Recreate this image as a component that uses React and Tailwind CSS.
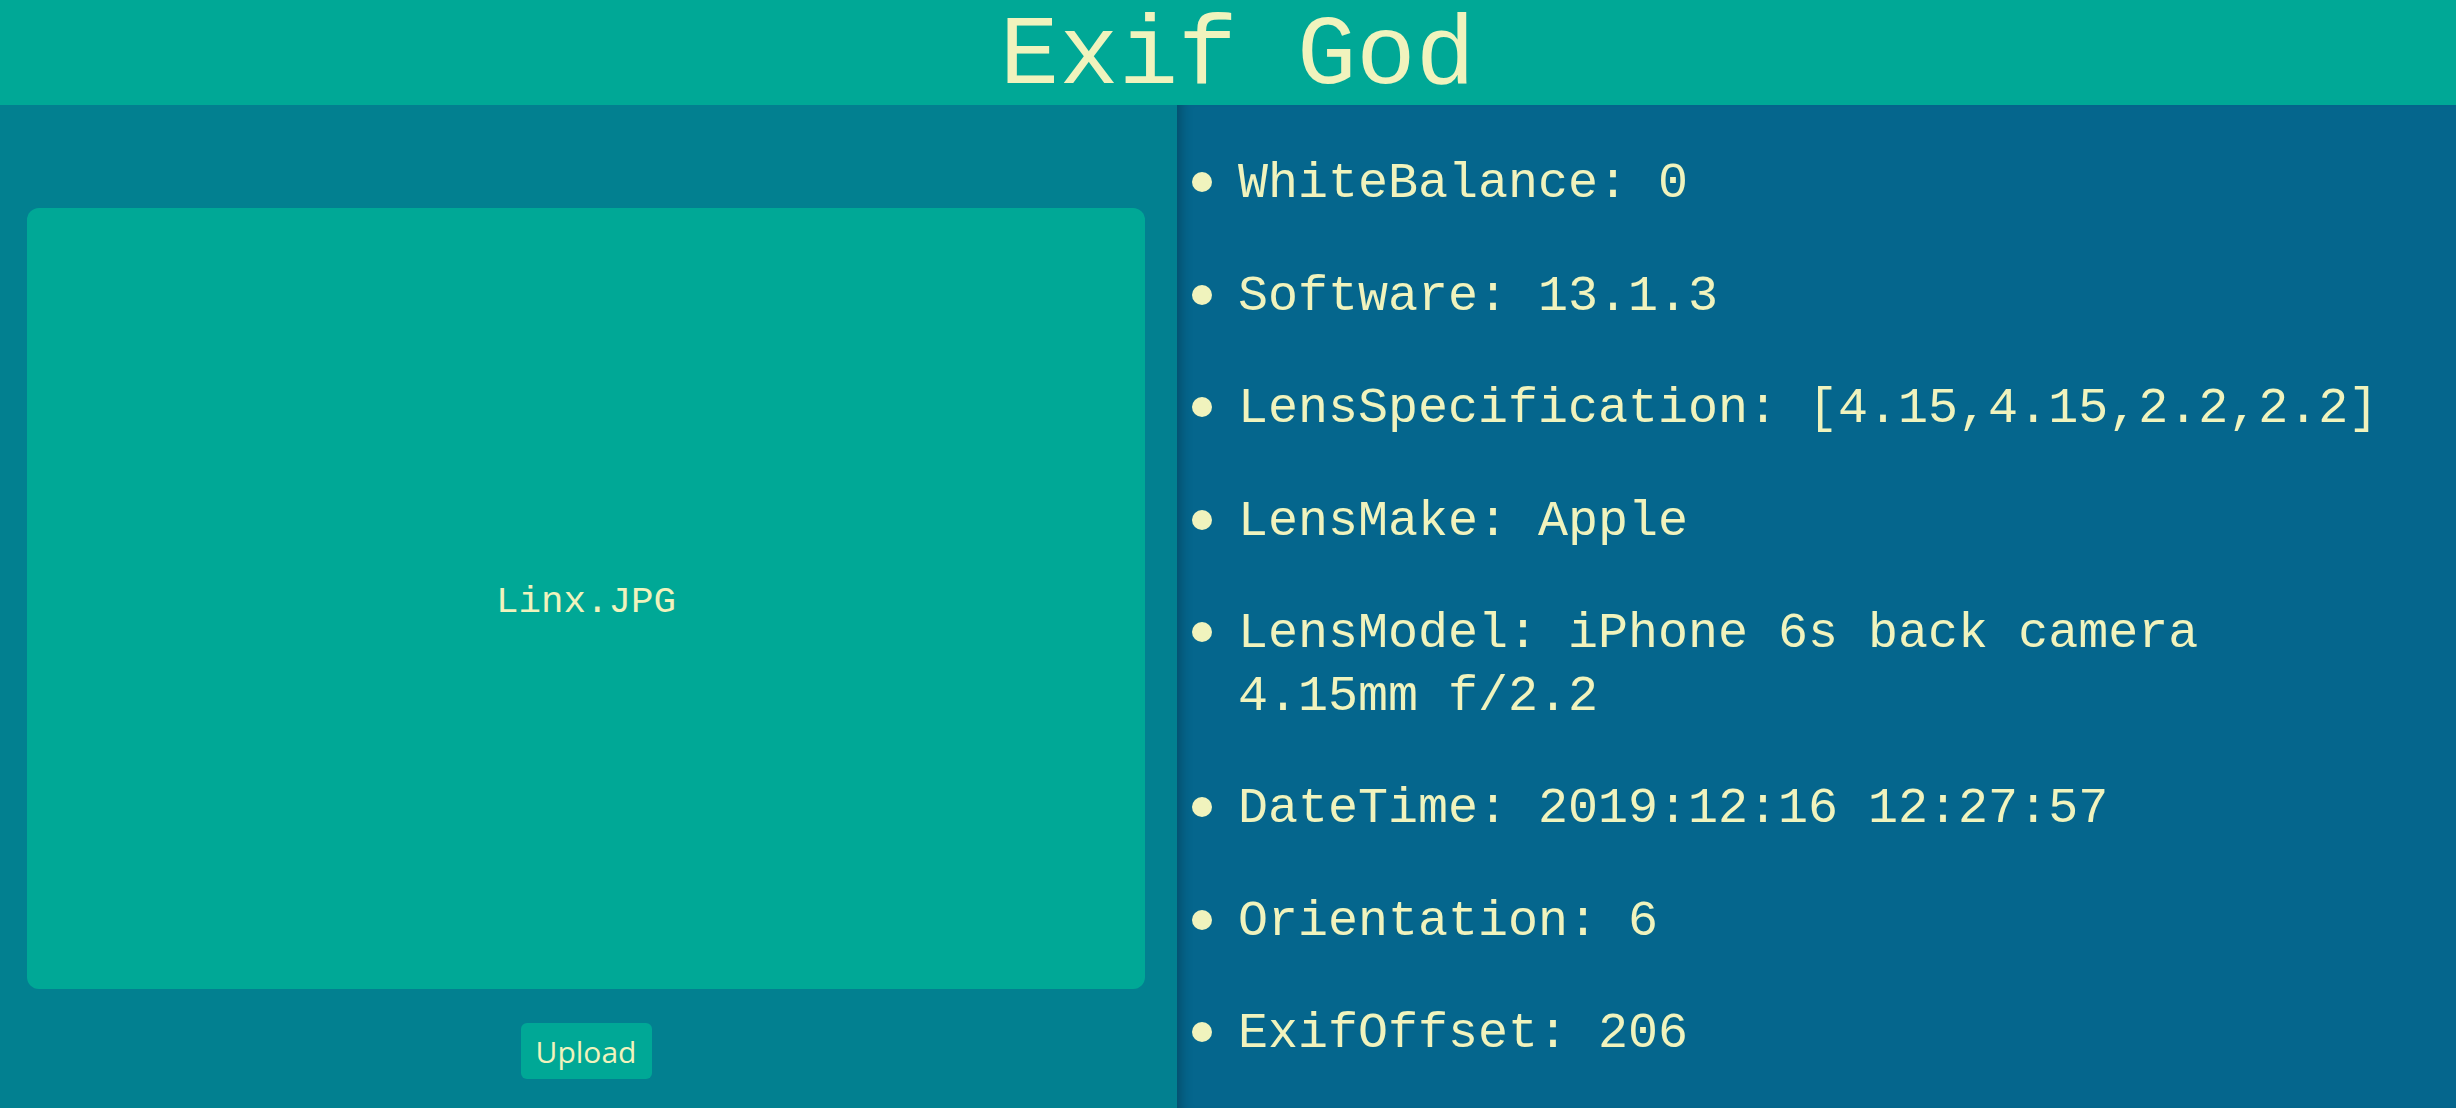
import React from "react";

const tags = [
  ["WhiteBalance", "0"],
  ["Software", "13.1.3"],
  ["LensSpecification", "[4.15,4.15,2.2,2.2]"],
  ["LensMake", "Apple"],
  ["LensModel", "iPhone 6s back camera 4.15mm f/2.2"],
  ["DateTime", "2019:12:16 12:27:57"],
  ["Orientation", "6"],
  ["ExifOffset", "206"],
];

export default function App() {
  return (
    <div className="flex h-screen flex-col overflow-hidden bg-[#05668d] font-['Liberation_Mono',monospace] text-[#f0f3bd]">
      <header className="h-[105px] shrink-0 bg-[#00a896] pl-[19px] pt-[10px] text-center">
        <h1 className="text-[99px] leading-[95px]">Exif God</h1>
      </header>

      <main className="flex flex-1">
        <section className="w-[1177px] shrink-0 bg-[#028090] pl-[27px] pr-[32px] pt-[103px]">
          <div className="flex h-[781px] items-center justify-center rounded-xl bg-[#00a896] pt-[7px] text-[37.5px]">
            Linx.JPG
          </div>
          <div className="mt-[34px] flex justify-center">
            <button className="h-[56px] w-[131px] rounded-md bg-[#00a896] font-['Open_Sans',sans-serif] text-[30px] text-[#f0f3bd]">
              Upload
            </button>
          </div>
        </section>

        <section className="flex-1 pl-[15px] pr-[60px] pt-[48px] shadow-[inset_14px_0_12px_-10px_rgba(0,0,0,0.25)]">
          <ul className="space-y-[50px] text-[50px] leading-[62.5px]">
            {tags.map(([key, value]) => (
              <li key={key} className="flex">
                <span className="flex h-[58px] w-5 shrink-0 items-center">
                  <span className="h-5 w-5 rounded-full bg-[#f0f3bd]" />
                </span>
                <span className="ml-[26px]">{`${key}: ${value}`}</span>
              </li>
            ))}
          </ul>
        </section>
      </main>
    </div>
  );
}
